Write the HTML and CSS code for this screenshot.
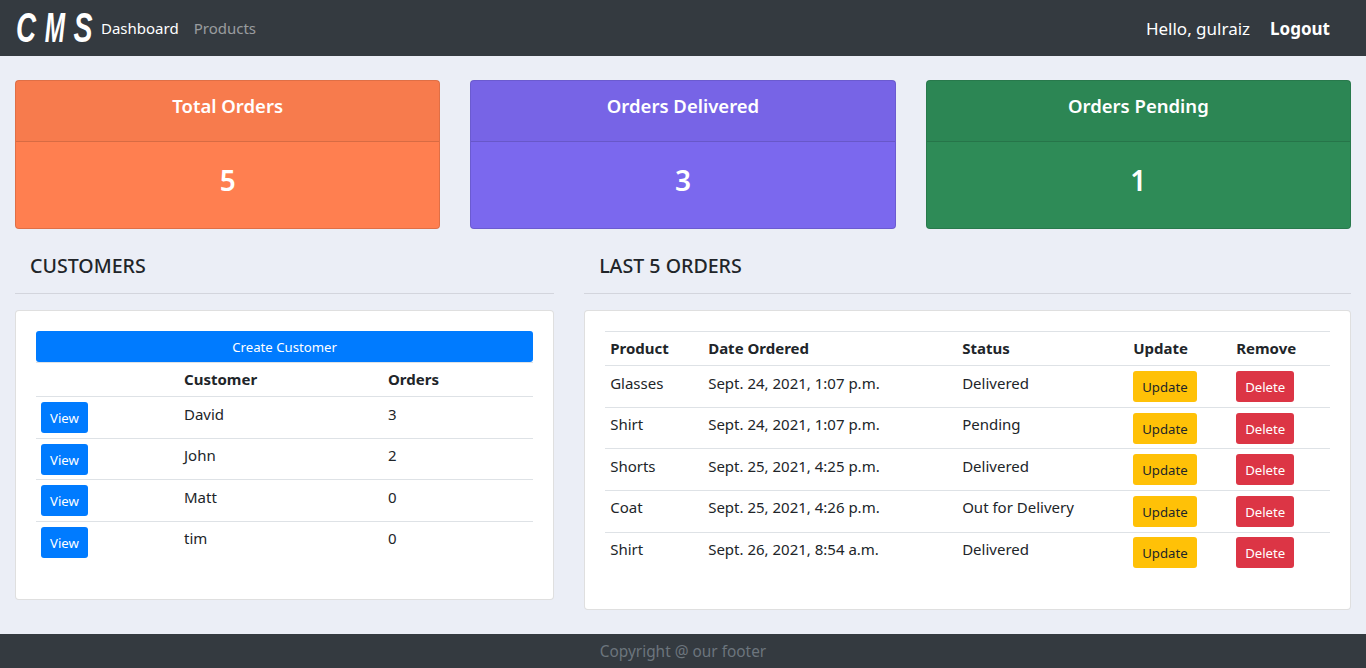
FILE: index.html
```html
<!doctype html>
<html>
<head>
  <meta charset="utf8">
  <title>CMS</title>
  <link rel="stylesheet" href="styles.css">
</head>
<body>
  <nav class="navbar">
    <a class="brand" href="#"><span class="brand-c">C</span><span class="brand-m">M</span><span class="brand-s">S</span></a>
    <a class="nav-link active" href="#">Dashboard</a>
    <a class="nav-link" href="#">Products</a>
    <span class="hello">Hello, gulraiz</span>
    <a class="logout" href="#">Logout</a>
  </nav>

  <main class="page">
    <section class="stats">
      <div class="stat stat-orange">
        <h5 class="stat-head">Total Orders</h5>
        <div class="stat-body">5</div>
      </div>
      <div class="stat stat-purple">
        <h5 class="stat-head">Orders Delivered</h5>
        <div class="stat-body">3</div>
      </div>
      <div class="stat stat-green">
        <h5 class="stat-head">Orders Pending</h5>
        <div class="stat-body">1</div>
      </div>
    </section>

    <section class="lists">
      <div class="col-customers">
        <h5 class="list-title">CUSTOMERS</h5>
        <hr class="rule">
        <div class="card">
          <a class="btn btn-blue btn-block" href="#">Create Customer</a>
          <table class="table table-customers">
            <tr><th></th><th>Customer</th><th>Orders</th></tr>
            <tr><td><a class="btn btn-blue" href="#">View</a></td><td>David</td><td>3</td></tr>
            <tr><td><a class="btn btn-blue" href="#">View</a></td><td>John</td><td>2</td></tr>
            <tr><td><a class="btn btn-blue" href="#">View</a></td><td>Matt</td><td>0</td></tr>
            <tr><td><a class="btn btn-blue" href="#">View</a></td><td>tim</td><td>0</td></tr>
          </table>
        </div>
      </div>

      <div class="col-orders">
        <h5 class="list-title">LAST 5 ORDERS</h5>
        <hr class="rule">
        <div class="card">
          <table class="table table-orders">
            <tr><th>Product</th><th>Date Ordered</th><th>Status</th><th>Update</th><th>Remove</th></tr>
            <tr><td>Glasses</td><td>Sept. 24, 2021, 1:07 p.m.</td><td>Delivered</td><td><a class="btn btn-yellow" href="#">Update</a></td><td><a class="btn btn-red" href="#">Delete</a></td></tr>
            <tr><td>Shirt</td><td>Sept. 24, 2021, 1:07 p.m.</td><td>Pending</td><td><a class="btn btn-yellow" href="#">Update</a></td><td><a class="btn btn-red" href="#">Delete</a></td></tr>
            <tr><td>Shorts</td><td>Sept. 25, 2021, 4:25 p.m.</td><td>Delivered</td><td><a class="btn btn-yellow" href="#">Update</a></td><td><a class="btn btn-red" href="#">Delete</a></td></tr>
            <tr><td>Coat</td><td>Sept. 25, 2021, 4:26 p.m.</td><td>Out for Delivery</td><td><a class="btn btn-yellow" href="#">Update</a></td><td><a class="btn btn-red" href="#">Delete</a></td></tr>
            <tr><td>Shirt</td><td>Sept. 26, 2021, 8:54 a.m.</td><td>Delivered</td><td><a class="btn btn-yellow" href="#">Update</a></td><td><a class="btn btn-red" href="#">Delete</a></td></tr>
          </table>
        </div>
      </div>
    </section>
  </main>

  <footer class="footer">Copyright @ our footer</footer>
</body>
</html>
```
FILE: styles.css
```css
html, body {
  margin: 0;
  padding: 0;
}
body {
  background: #ebeef6;
  color: #212529;
  font-family: "Noto Sans", "Open Sans", sans-serif;
  font-size: 15px;
  line-height: 24px;
}
a {
  text-decoration: none;
}

/* navbar */
.navbar {
  display: flex;
  align-items: center;
  height: 56px;
  padding: 0 36px 0 15px;
  background: #343a40;
}
.brand {
  display: flex;
  justify-content: space-between;
  width: 75px;
  margin: 0 9px 0 2px;
  color: #fff;
  font-family: "Liberation Sans", sans-serif;
  font-size: 42px;
  font-style: italic;
  font-weight: bold;
  line-height: 42px;
}
.brand span {
  display: flex;
  justify-content: center;
  width: 18px;
}
.brand-c { transform: scaleX(.66); }
.brand-m { transform: scaleX(.58); }
.brand-s { transform: scaleX(.68); }
.nav-link {
  margin-right: 15px;
  color: rgba(255, 255, 255, .5);
}
.nav-link.active {
  color: #fff;
}
.hello {
  margin-left: auto;
  padding-top: 2px;
  color: #fff;
  font-size: 17px;
}
.logout {
  margin-left: 20px;
  padding-top: 2px;
  color: #fff;
  font-size: 17px;
  font-weight: bold;
}

/* stat cards */
.page {
  padding-top: 24px;
}
.stats {
  display: grid;
  grid-template-columns: repeat(3, 1fr);
}
.stat {
  margin: 0 15px;
  height: 149px;
  box-sizing: border-box;
  border: 1px solid rgba(0, 0, 0, .125);
  border-radius: 4px;
  color: #fff;
  text-align: center;
}
.stat-orange { background: #ff7f50; }
.stat-purple { background: #7b68ee; }
.stat-green { background: #2e8b57; }
.stat-head {
  margin: 0;
  height: 61px;
  box-sizing: border-box;
  padding-top: 13px;
  border-bottom: 1px solid rgba(0, 0, 0, .125);
  background: rgba(0, 0, 0, .03);
  font-size: 18.5px;
  font-weight: 600;
  line-height: 24px;
}
.stat-body {
  padding-top: 20px;
  font-size: 28px;
  font-weight: 600;
  line-height: 36px;
}

/* lower lists */
.lists {
  display: grid;
  grid-template-columns: 5fr 7fr;
  padding-top: 22px;
}
.col-customers, .col-orders {
  padding: 0 15px;
}
.list-title {
  margin: 0;
  padding-left: 15px;
  font-size: 19.6px;
  font-weight: 500;
  line-height: 30px;
}
.rule {
  margin: 12px 0 16px;
  border: 0;
  border-top: 1px solid rgba(0, 0, 0, .1);
}
.card {
  padding: 20px 20px 36px;
  border: 1px solid rgba(0, 0, 0, .125);
  border-radius: 4px;
  background: #fff;
}

/* tables */
.table {
  width: 100%;
  border-collapse: collapse;
  table-layout: fixed;
}
.table th, .table td {
  padding: 4.5px 5px 5.1px;
  border-top: 1px solid #dee2e6;
  text-align: left;
  vertical-align: top;
}
.table th {
  padding: 4px 5px 5.2px;
  font-weight: bold;
}
.table td .btn {
  margin-top: .3px;
  margin-bottom: -.3px;
}
.table-customers th:nth-child(1) { width: 133px; }
.table-customers th:nth-child(2) { width: 194px; }
.table-orders th:nth-child(1) { width: 88px; }
.table-orders th:nth-child(2) { width: 244px; }
.table-orders th:nth-child(3) { width: 161px; }
.table-orders th:nth-child(4) { width: 93px; }

/* buttons */
.btn {
  display: inline-block;
  vertical-align: top;
  padding: 5px 8px 3px;
  border: 1px solid transparent;
  border-radius: 3px;
  font-size: 13.2px;
  line-height: 21px;
  text-align: center;
}
.btn-block {
  display: block;
}
.btn-blue {
  background: #007bff;
  color: #fff;
}
.btn-yellow {
  background: #ffc107;
  color: #212529;
}
.btn-red {
  background: #dc3545;
  color: #fff;
}

/* footer */
.footer {
  margin-top: 24px;
  height: 34px;
  background: #343a40;
  color: #6c757d;
  font-size: 15.4px;
  line-height: 36px;
  text-align: center;
}
```
